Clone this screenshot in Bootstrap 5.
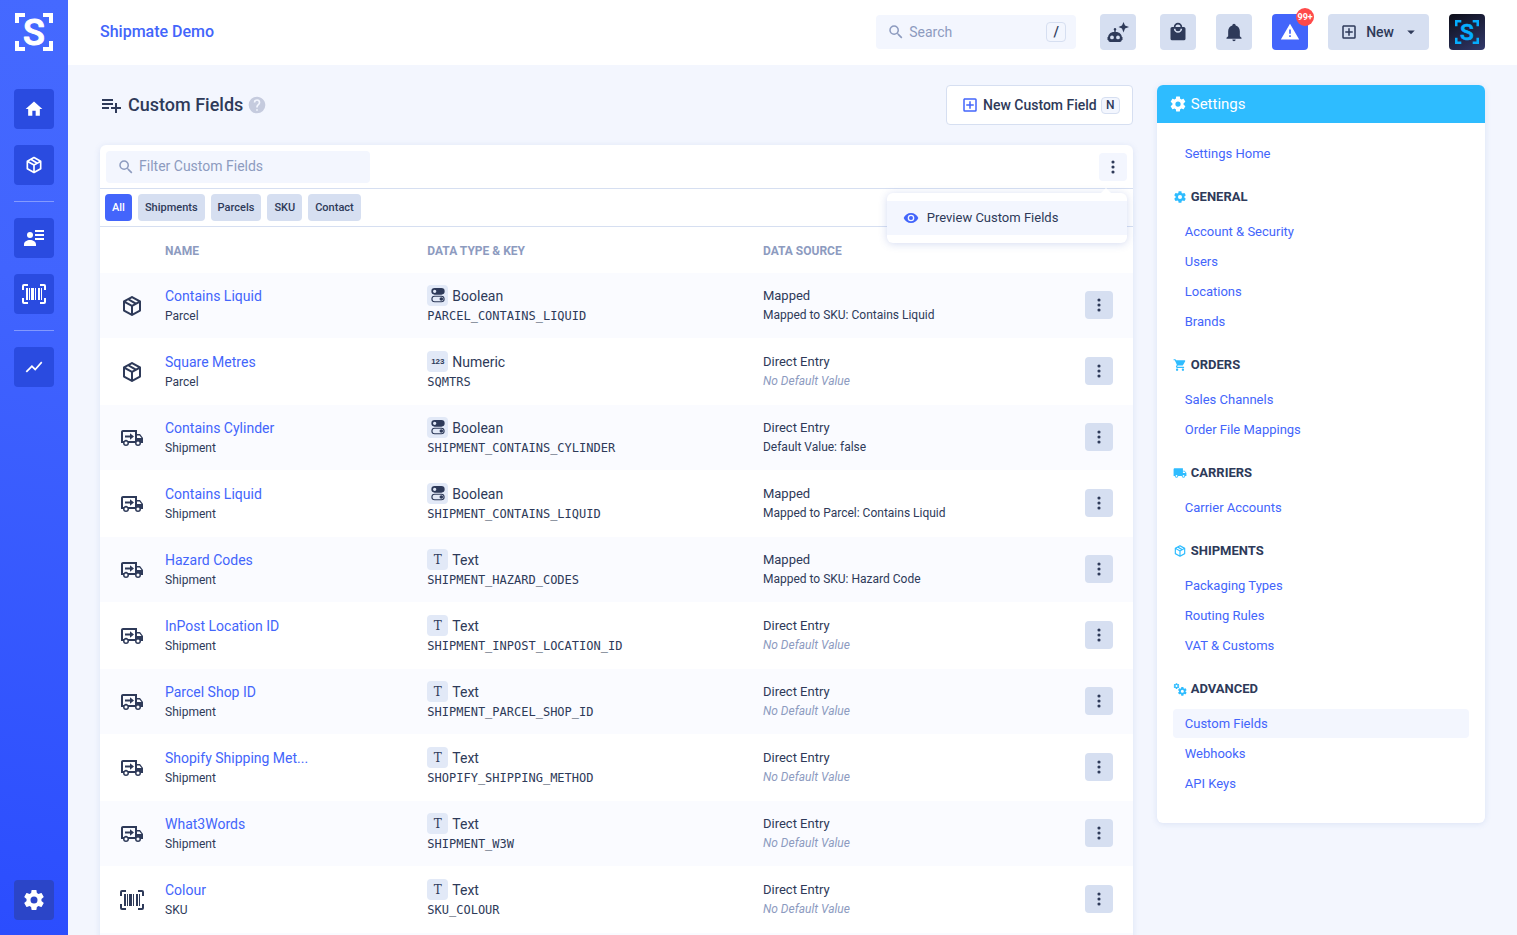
<!DOCTYPE html>
<html lang="en">
<head>
<meta charset="utf-8">
<meta name="viewport" content="width=device-width, initial-scale=1">
<title>Custom Fields</title>
<link href="https://cdn.jsdelivr.net/npm/bootstrap@5.3.0/dist/css/bootstrap.min.css" rel="stylesheet">
<style>
  :root { --ink:#2e3a59; --brand:#4365fb; --muted-ink:#8d9bbf; --tint:#f3f6fe; --chip:#d6dff1; --sky:#2ebcff; }
  body { font-family: Roboto, "Liberation Sans", sans-serif; font-size: 14px; line-height: 20px; color: var(--ink); background: var(--tint); }
  a { color: var(--brand); text-decoration: none; }
  svg { display: block; fill: currentColor; flex: none; }
  .i14 { width: 14px; height: 14px; } .i16 { width: 16px; height: 16px; } .i18 { width: 18px; height: 18px; }
  .i20 { width: 20px; height: 20px; } .i24 { width: 24px; height: 24px; }
  .rail { width: 68px; padding: 13px 14px 15px; background: linear-gradient(190deg, #4569ff, #4164fe 30%, #2b4dfe); }
  .rail .logo { width: 38px; height: 38px; margin-bottom: 38px; color: #fff; }
  .rail-btn { width: 40px; height: 40px; border-radius: 4px; background: #2a4be0; color: #fff; margin-bottom: 16px; }
  .rail-btn.current { background: #2b45c8; margin-bottom: 0; }
  .rail hr { width: 40px; margin: 0 0 16px; border-color: #fff; opacity: .35; }
  .topbar { height: 65px; padding: 0 32px 1px; background: #fff; }
  .site-name { font-size: 16px; font-weight: 500; }
  .field-box { background: var(--tint); border-radius: 4px; color: var(--muted-ink); padding-left: 11px; }
  .field-box input { border: 0; background: none; box-shadow: none; font-size: 14px; padding: 0; color: var(--ink); min-width: 0; }
  .field-box input::placeholder { color: var(--muted-ink); opacity: 1; }
  .field-box input:focus { background: none; box-shadow: none; }
  .search { width: 200px; height: 34px; padding-right: 10px; }
  .key { font-family: inherit; font-weight: 500; color: var(--ink); border: 1px solid var(--chip); border-radius: 4px; background: var(--tint); padding: 0; text-align: center; }
  .key-lg { width: 20px; height: 20px; font-size: 14px; line-height: 18px; }
  .key-sm { width: 19px; height: 17px; font-size: 12px; line-height: 15px; }
  .tiles { gap: 20px; }
  .tile { --bs-btn-padding-x: 0; --bs-btn-padding-y: 0; width: 36px; height: 36px; border: 0; border-radius: 4px; background: var(--chip); color: var(--ink); }
  .tile.alerting { background: var(--brand); color: #fff; }
  .tile.wide { width: auto; padding: 0 9px 0 12px; font-size: 14px; font-weight: 500; }
  .count { top: -6px; right: -6px; width: 18px; height: 18px; border-radius: 9px; background: #ff4a4a; color: #fff; font-size: 9px; font-weight: 700; line-height: 18px; }
  .avatar { width: 36px; height: 36px; border-radius: 4px; background: linear-gradient(150deg, #0c0d18, #32396b); color: #05adff; }
  .page { padding: 20px 32px 0; scrollbar-width: none; }
  .page::-webkit-scrollbar { display: none; }
  .page-head { margin-bottom: 20px; }
  .page-title { font-size: 18px; line-height: 24px; font-weight: 500; }
  .hint { color: #c5cbde; }
  .btn-outline { height: 40px; padding: 0 12px 0 14px; background: #fff; border: 1px solid var(--chip); border-radius: 4px; color: var(--ink); font-size: 14px; font-weight: 500; }
  .btn-outline svg { color: var(--brand); }
  .panel { background: #fff; border-radius: 6px; box-shadow: 0 1px 6px rgba(80,110,190,.14); }
  .bar { border-bottom: 1px solid var(--chip); }
  .toolbar-row { height: 44px; padding: 0 6px; }
  .pills { height: 38px; padding: 0 5px; gap: 6px; }
  .filter { width: 264px; height: 32px; }
  .dots { --bs-btn-padding-x: 0; --bs-btn-padding-y: 0; width: 28px; height: 28px; border: 0; border-radius: 4px; background: var(--chip); color: var(--ink); }
  .dots.pale { background: var(--tint); }
  .pill { height: 27px; padding: 2px 7px 0; border: 0; border-radius: 4px; background: var(--chip); color: var(--ink); font-size: 11px; font-weight: 500; }
  .pill.on { background: var(--brand); color: #fff; }
  .menu { top: 40px; right: 0; width: 240px; padding: 8px 0; border: 0; border-radius: 6px; box-shadow: 0 1px 8px rgba(60,90,190,.22); }
  .menu::before { content: ""; position: absolute; top: -5px; right: 16px; border: solid transparent; border-width: 0 5px 5px; border-bottom-color: #fff; }
  .menu .dropdown-item { height: 34px; padding: 0 16px; color: var(--ink); background: var(--tint); font-size: 13px; }
  .menu svg { color: var(--brand); }
  .grid { table-layout: fixed; width: 100%; }
  .grid .c-icon { width: 65px; } .grid .c-name { width: 25.4%; } .grid .c-type { width: 32.5%; } .grid .c-act { width: 68px; }
  .grid th { height: 45px; padding: 3px 0 0; font-size: 12px; font-weight: 700; color: var(--muted-ink); vertical-align: middle; }
  .grid td { height: 66px; padding: 13px 20px 0 0; border-top: 1px solid #fff; vertical-align: top; }
  .grid td:first-child { padding: 21px 20px 0; }
  .grid td:last-child { padding: 18px 20px 0; }
  .grid tbody tr:nth-child(odd) { background: #fafbff; }
  .name { width: 148px; font-size: 14px; }
  .sub { font-size: 12px; }
  .src { font-size: 13px; }
  .note { font-size: 12px; line-height: 18px; }
  .note-none { color: var(--muted-ink); font-style: italic; }
  .code { font: 12px/20px "DejaVu Sans Mono", monospace; }
  .kind { width: 21px; height: 21px; margin: -1px 4px 0 0; border-radius: 4px; background: #e2e9f7; }
  .kind-line { height: 20px; }
  .kind-num { font: 700 8px/22px "Liberation Sans", sans-serif; }
  .kind-txt { font: 12px/22px "DejaVu Serif", "Liberation Serif", serif; }
  .settings-head { height: 38px; padding: 0 12px; background: var(--sky); color: #fff; font-size: 15px; border-radius: 6px 6px 0 0; }
  .settings-body { padding: 16px 16px 24px; }
  .settings-body h2 { font-size: 13px; line-height: 20px; font-weight: 700; margin: 18px 0 10px; }
  .settings-body h2 svg { color: var(--sky); }
  .settings-body .nav-link { height: 29px; margin-bottom: 1px; padding: 0 12px; line-height: 29px; font-size: 13px; color: var(--brand); border-radius: 4px; }
  .settings-body .nav-link.active { background: var(--tint); }
</style>
</head>
<body>
<svg class="d-none" aria-hidden="true">
  <symbol id="logo" viewBox="0 0 38 38">
    <path d="M0 0h10v4H4v6H0zM28 0h10v10h-4V4h-6zM0 28h4v6h6v4H0zM34 28h4v10H28v-4h6z"/>
    <text x="19" y="32" text-anchor="middle" font-family="Roboto, sans-serif" font-weight="500" font-size="36" stroke="currentColor" stroke-width="1" stroke-linejoin="round">S</text>
  </symbol>
  <symbol id="home" viewBox="0 0 24 24"><path d="M10,20V14H14V20H19V12H22L12,3L2,12H5V20H10Z"/></symbol>
  <symbol id="box" viewBox="0 0 24 24"><path d="M21,16.5C21,16.88 20.79,17.21 20.47,17.38L12.57,21.82C12.41,21.94 12.21,22 12,22C11.79,22 11.59,21.94 11.43,21.82L3.53,17.38C3.21,17.21 3,16.88 3,16.5V7.5C3,7.12 3.21,6.79 3.53,6.62L11.43,2.18C11.59,2.06 11.79,2 12,2C12.21,2 12.41,2.06 12.57,2.18L20.47,6.62C20.79,6.79 21,7.12 21,7.5V16.5M12,4.15L10.11,5.22L16,8.61L17.96,7.5L12,4.15M6.04,7.5L12,10.85L13.96,9.75L8.08,6.35L6.04,7.5M5,15.91L11,19.29V12.58L5,9.21V15.91M19,15.91V9.21L13,12.58V19.29L19,15.91Z"/></symbol>
  <symbol id="people" viewBox="0 0 24 24"><circle cx="8" cy="9" r="3"/><path d="M2 20v-1.500C2 15.500 5 14 8 14s6 1.500 6 4.500V20zM13 4h9v2h-9zM13 8h9v2h-9zM13 12h9v2h-9z"/></symbol>
  <symbol id="barcode" viewBox="0 0 24 24"><path d="M4,6H6V18H4V6M7,6H8V18H7V6M9,6H12V18H9V6M13,6H14V18H13V6M16,6H18V18H16V6M19,6H20V18H19V6M2,4V8H0V4A2,2 0 0,1 2,2H6V4H2M22,2A2,2 0 0,1 24,4V8H22V4H18V2H22M2,16V20H6V22H2A2,2 0 0,1 0,20V16H2M22,20V16H24V20A2,2 0 0,1 22,22H18V20H22Z"/></symbol>
  <symbol id="trend" viewBox="0 0 24 24"><path d="M3.5,18.5L9.5,12.5L13.5,16.5L22,6.92L20.59,5.5L13.5,13.5L9.5,9.5L2,17L3.5,18.5Z"/></symbol>
  <symbol id="cog" viewBox="0 0 24 24"><path d="M12,15.5A3.5,3.5 0 0,1 8.5,12A3.5,3.5 0 0,1 12,8.5A3.5,3.5 0 0,1 15.5,12A3.5,3.5 0 0,1 12,15.5M19.43,12.97C19.47,12.65 19.5,12.33 19.5,12C19.5,11.67 19.47,11.34 19.43,11L21.54,9.37C21.73,9.22 21.78,8.95 21.66,8.73L19.66,5.27C19.54,5.05 19.27,4.96 19.05,5.05L16.56,6.05C16.04,5.66 15.5,5.32 14.87,5.07L14.5,2.42C14.46,2.18 14.25,2 14,2H10C9.75,2 9.54,2.18 9.5,2.42L9.13,5.07C8.5,5.32 7.96,5.66 7.44,6.05L4.95,5.05C4.73,4.96 4.46,5.05 4.34,5.27L2.34,8.73C2.21,8.95 2.27,9.22 2.46,9.37L4.57,11C4.53,11.34 4.5,11.67 4.5,12C4.5,12.33 4.53,12.65 4.57,12.97L2.46,14.63C2.27,14.78 2.21,15.05 2.34,15.27L4.34,18.73C4.46,18.95 4.73,19.03 4.95,18.95L7.44,17.94C7.96,18.34 8.5,18.68 9.13,18.93L9.5,21.58C9.54,21.82 9.75,22 10,22H14C14.25,22 14.46,21.82 14.5,21.58L14.87,18.93C15.5,18.67 16.04,18.34 16.56,17.94L19.05,18.95C19.27,19.03 19.54,18.95 19.66,18.73L21.66,15.27C21.78,15.05 21.73,14.78 21.54,14.63L19.43,12.97Z"/></symbol>
  <symbol id="cogs" viewBox="0 0 24 24"><use href="#cog" x="0" y="1" width="12" height="12"/><use href="#cog" x="7" y="7" width="18" height="18"/></symbol>
  <symbol id="search" viewBox="0 0 24 24"><path d="M9.5,3A6.5,6.5 0 0,1 16,9.5C16,11.11 15.41,12.59 14.44,13.73L14.71,14H15.5L20.5,19L19,20.5L14,15.5V14.71L13.73,14.44C12.59,15.41 11.11,16 9.5,16A6.5,6.5 0 0,1 3,9.5A6.5,6.5 0 0,1 9.5,3M9.5,5C7,5 5,7 5,9.5C5,12 7,14 9.5,14C12,14 14,12 14,9.5C14,7 12,5 9.5,5Z"/></symbol>
  <symbol id="robot" viewBox="0 0 24 24"><path d="M9 8a1.300 1.300 0 0 1 .7 2.400V12H10c3.300 0 5.600 2.200 5.900 5h.6v3h-.7c-.2 1-.9 2-2 2H4.200c-1.100 0-1.800-1-2-2H1.500v-3h.6C2.400 14.200 4.700 12 8 12h.3v-1.600A1.300 1.300 0 0 1 9 8zM6 15.500a1.900 1.900 0 1 0 0 3.800 1.900 1.900 0 0 0 0-3.800zm6 0a1.900 1.900 0 1 0 0 3.800 1.900 1.900 0 0 0 0-3.800zM17.500 2 19 5.500l4 1.500-4 1.500-1.500 4-1.500-4L12.500 7 16 5.500z"/></symbol>
  <symbol id="bag" viewBox="0 0 24 24"><path d="M12,13A5,5 0 0,1 7,8H9A3,3 0 0,0 12,11A3,3 0 0,0 15,8H17A5,5 0 0,1 12,13M12,3A3,3 0 0,1 15,6H9A3,3 0 0,1 12,3M19,6H17A5,5 0 0,0 12,1A5,5 0 0,0 7,6H5C3.89,6 3,6.89 3,8V20A2,2 0 0,0 5,22H19A2,2 0 0,0 21,20V8C21,6.89 20.1,6 19,6Z"/></symbol>
  <symbol id="bell" viewBox="0 0 24 24"><path d="M21,19V20H3V19L5,17V11C5,7.9 7.03,5.17 10,4.29C10,4.19 10,4.1 10,4A2,2 0 0,1 12,2A2,2 0 0,1 14,4C14,4.1 14,4.19 14,4.29C16.97,5.17 19,7.9 19,11V17L21,19M14,21A2,2 0 0,1 12,23A2,2 0 0,1 10,21"/></symbol>
  <symbol id="alert" viewBox="0 0 24 24"><path d="M13 14H11V9H13M13 18H11V16H13M1 21H23L12 2L1 21Z"/></symbol>
  <symbol id="plusbox" viewBox="0 0 24 24"><path d="M19,19V5H5V19H19M19,3A2,2 0 0,1 21,5V19A2,2 0 0,1 19,21H5A2,2 0 0,1 3,19V5C3,3.89 3.9,3 5,3H19M11,7H13V11H17V13H13V17H11V13H7V11H11V7Z"/></symbol>
  <symbol id="caret" viewBox="0 0 24 24"><path d="M7 10h10l-5 5z"/></symbol>
  <symbol id="listplus" viewBox="0 0 24 24"><path d="M2 16H9V14H2M17 14V10H15V14H11V16H15V20H17V16H21V14M13 6H2V8H13M13 10H2V12H13V10Z"/></symbol>
  <symbol id="help" viewBox="0 0 24 24"><path d="M15.07,11.25L14.17,12.17C13.45,12.89 13,13.5 13,15H11V14.5C11,13.39 11.45,12.39 12.17,11.67L13.41,10.41C13.78,10.05 14,9.55 14,9C14,7.89 13.1,7 12,7A2,2 0 0,0 10,9H8A4,4 0 0,1 12,5A4,4 0 0,1 16,9C16,9.88 15.64,10.67 15.07,11.25M13,19H11V17H13M12,2A10,10 0 0,0 2,12A10,10 0 0,0 12,22A10,10 0 0,0 22,12C22,6.47 17.5,2 12,2Z"/></symbol>
  <symbol id="more" viewBox="0 0 24 24"><circle cx="12" cy="6" r="1.900"/><circle cx="12" cy="12" r="1.900"/><circle cx="12" cy="18" r="1.900"/></symbol>
  <symbol id="eye" viewBox="0 0 24 24"><path d="M12,9A3,3 0 0,0 9,12A3,3 0 0,0 12,15A3,3 0 0,0 15,12A3,3 0 0,0 12,9M12,17A5,5 0 0,1 7,12A5,5 0 0,1 12,7A5,5 0 0,1 17,12A5,5 0 0,1 12,17M12,4.5C7,4.5 2.73,7.61 1,12C2.73,16.39 7,19.5 12,19.5C17,19.5 21.27,16.39 23,12C21.27,7.61 17,4.5 12,4.5Z"/></symbol>
  <symbol id="cart" viewBox="0 0 24 24"><path d="M17,18C15.89,18 15,18.89 15,20A2,2 0 0,0 17,22A2,2 0 0,0 19,20C19,18.89 18.1,18 17,18M1,2V4H3L6.6,11.59L5.24,14.04C5.09,14.32 5,14.65 5,15A2,2 0 0,0 7,17H19V15H7.42A0.25,0.25 0 0,1 7.17,14.75C7.17,14.7 7.18,14.66 7.2,14.63L8.1,13H15.55C16.3,13 16.96,12.58 17.3,11.97L20.88,5.5C20.95,5.34 21,5.17 21,5A1,1 0 0,0 20,4H5.21L4.27,2M7,18C5.89,18 5,18.89 5,20A2,2 0 0,0 7,22A2,2 0 0,0 9,20C9,18.89 8.1,18 7,18Z"/></symbol>
  <symbol id="truck" viewBox="0 0 24 24"><path d="M18,18.5A1.5,1.5 0 0,1 16.5,17A1.5,1.5 0 0,1 18,15.5A1.5,1.5 0 0,1 19.5,17A1.5,1.5 0 0,1 18,18.5M19.5,9.5L21.46,12H17V9.5M6,18.5A1.5,1.5 0 0,1 4.5,17A1.5,1.5 0 0,1 6,15.5A1.5,1.5 0 0,1 7.5,17A1.5,1.5 0 0,1 6,18.5M20,8H17V4H3C1.89,4 1,4.89 1,6V17H3A3,3 0 0,0 6,20A3,3 0 0,0 9,17H15A3,3 0 0,0 18,20A3,3 0 0,0 21,17H23V12L20,8Z"/></symbol>
  <symbol id="dispatch" viewBox="0 0 24 24"><path fill-rule="evenodd" d="M3 4h14v4h3l3 4v5h-2a3 3 0 0 1-6 0H9a3 3 0 0 1-6 0H1V6c0-1.100.9-2 2-2zm0 2v9h.8a3 3 0 0 1 4.400 0H15V6zm14 3.500V12h4.500l-2-2.500zM6 15.500a1.500 1.500 0 1 0 0 3 1.500 1.500 0 0 0 0-3zm12 0a1.500 1.500 0 1 0 0 3 1.500 1.500 0 0 0 0-3z"/><path d="M5 9.500h5V7.200l4 3.300-4 3.300v-2.300H5z"/></symbol>
  <symbol id="toggle" viewBox="0 0 24 24"><path fill-rule="evenodd" d="M7 1.500h10a5 5 0 0 1 0 10H7a5 5 0 0 1 0-10zM7 4a2.500 2.500 0 1 0 0 5 2.500 2.500 0 0 0 0-5zM7 13h10a5 5 0 0 1 0 10H7a5 5 0 0 1 0-10zm0 1.700a3.300 3.300 0 0 0 0 6.600h10a3.300 3.300 0 0 0 0-6.600z"/><circle cx="17" cy="18" r="2.700"/></symbol>
</svg>

<div class="d-flex vh-100 overflow-hidden">
  <nav class="rail d-flex flex-column align-items-center flex-shrink-0" aria-label="Main">
    <a class="logo" href="#" aria-label="Shipmate"><svg width="38" height="38"><use href="#logo"/></svg></a>
    <a class="rail-btn d-flex align-items-center justify-content-center" href="#" aria-label="Home"><svg class="i20"><use href="#home"/></svg></a>
    <a class="rail-btn d-flex align-items-center justify-content-center" href="#" aria-label="Parcels"><svg class="i20"><use href="#box"/></svg></a>
    <hr>
    <a class="rail-btn d-flex align-items-center justify-content-center" href="#" aria-label="Contacts"><svg class="i24"><use href="#people"/></svg></a>
    <a class="rail-btn d-flex align-items-center justify-content-center" href="#" aria-label="Products"><svg class="i24"><use href="#barcode"/></svg></a>
    <hr>
    <a class="rail-btn d-flex align-items-center justify-content-center" href="#" aria-label="Reports"><svg class="i20"><use href="#trend"/></svg></a>
    <a class="rail-btn current mt-auto d-flex align-items-center justify-content-center" href="#" aria-label="Settings"><svg class="i24"><use href="#cog"/></svg></a>
  </nav>

  <div class="d-flex flex-column flex-grow-1 overflow-hidden">
    <header class="topbar d-flex align-items-center flex-shrink-0">
      <a class="site-name me-auto" href="#">Shipmate Demo</a>
      <div class="field-box search d-flex align-items-center me-4">
        <svg class="i18 me-1"><use href="#search"/></svg>
        <input class="form-control" type="text" placeholder="Search" aria-label="Search">
        <kbd class="key key-lg flex-shrink-0 bg-transparent">/</kbd>
      </div>
      <button class="tile btn d-flex align-items-center justify-content-center me-4" type="button" aria-label="Assistant"><svg class="i24"><use href="#robot"/></svg></button>
      <div class="tiles d-flex align-items-center">
        <button class="tile btn d-flex align-items-center justify-content-center" type="button" aria-label="Store"><svg class="i20"><use href="#bag"/></svg></button>
        <button class="tile btn d-flex align-items-center justify-content-center" type="button" aria-label="Notifications"><svg class="i20"><use href="#bell"/></svg></button>
        <button class="tile alerting btn d-flex align-items-center justify-content-center position-relative" type="button" aria-label="Alerts"><svg class="i20"><use href="#alert"/></svg><span class="count position-absolute">99+</span></button>
        <button class="tile wide btn d-flex align-items-center" type="button"><svg class="i18 me-2"><use href="#plusbox"/></svg>New<svg class="i18 ms-2"><use href="#caret"/></svg></button>
        <a class="avatar d-flex align-items-center justify-content-center" href="#" aria-label="Account"><svg width="24" height="24"><use href="#logo"/></svg></a>
      </div>
    </header>

    <main class="page flex-grow-1 overflow-auto">
      <div class="row gx-4">
        <div class="col-9">
          <div class="page-head d-flex align-items-center justify-content-between">
            <h1 class="page-title d-flex align-items-center mb-0"><svg class="i24 me-1"><use href="#listplus"/></svg>Custom Fields<svg class="hint i20 ms-1"><use href="#help"/></svg></h1>
            <button class="btn-outline btn d-flex align-items-center" type="button"><svg class="i18 me-1"><use href="#plusbox"/></svg>New Custom Field<kbd class="key key-sm ms-1">N</kbd></button>
          </div>

          <section class="panel">
            <div class="bar toolbar-row d-flex align-items-center justify-content-between">
              <div class="field-box filter d-flex align-items-center">
                <svg class="i18 me-1"><use href="#search"/></svg>
                <input class="form-control" type="text" placeholder="Filter Custom Fields" aria-label="Filter Custom Fields">
              </div>
              <div class="dropdown">
                <button class="dots pale btn d-flex align-items-center justify-content-center" type="button" aria-label="More actions" aria-expanded="true"><svg class="i20"><use href="#more"/></svg></button>
                <div class="menu dropdown-menu show">
                  <a class="dropdown-item d-flex align-items-center" href="#"><svg class="i16 me-2"><use href="#eye"/></svg>Preview Custom Fields</a>
                </div>
              </div>
            </div>
            <div class="bar pills d-flex align-items-center">
              <button class="pill on btn" type="button">All</button>
              <button class="pill btn" type="button">Shipments</button>
              <button class="pill btn" type="button">Parcels</button>
              <button class="pill btn" type="button">SKU</button>
              <button class="pill btn" type="button">Contact</button>
            </div>
            <table class="grid">
              <colgroup><col class="c-icon"><col class="c-name"><col class="c-type"><col><col class="c-act"></colgroup>
              <thead><tr><th></th><th scope="col">NAME</th><th scope="col">DATA TYPE &amp; KEY</th><th scope="col">DATA SOURCE</th><th></th></tr></thead>
              <tbody>
                <tr><td><svg class="i24"><use href="#box"/></svg></td><td><a class="name d-block text-truncate" href="#">Contains Liquid</a><div class="sub">Parcel</div></td><td><div class="kind-line d-flex"><span class="kind d-flex align-items-center justify-content-center"><svg class="i16"><use href="#toggle"/></svg></span>Boolean</div><div class="code">PARCEL_CONTAINS_LIQUID</div></td><td><div class="src">Mapped</div><div class="note">Mapped to SKU: Contains Liquid</div></td><td><button class="dots btn d-flex align-items-center justify-content-center" type="button" aria-label="Row actions"><svg class="i20"><use href="#more"/></svg></button></td></tr>
                <tr><td><svg class="i24"><use href="#box"/></svg></td><td><a class="name d-block text-truncate" href="#">Square Metres</a><div class="sub">Parcel</div></td><td><div class="kind-line d-flex"><span class="kind kind-num text-center">123</span>Numeric</div><div class="code">SQMTRS</div></td><td><div class="src">Direct Entry</div><div class="note note-none">No Default Value</div></td><td><button class="dots btn d-flex align-items-center justify-content-center" type="button" aria-label="Row actions"><svg class="i20"><use href="#more"/></svg></button></td></tr>
                <tr><td><svg class="i24"><use href="#dispatch"/></svg></td><td><a class="name d-block text-truncate" href="#">Contains Cylinder</a><div class="sub">Shipment</div></td><td><div class="kind-line d-flex"><span class="kind d-flex align-items-center justify-content-center"><svg class="i16"><use href="#toggle"/></svg></span>Boolean</div><div class="code">SHIPMENT_CONTAINS_CYLINDER</div></td><td><div class="src">Direct Entry</div><div class="note">Default Value: false</div></td><td><button class="dots btn d-flex align-items-center justify-content-center" type="button" aria-label="Row actions"><svg class="i20"><use href="#more"/></svg></button></td></tr>
                <tr><td><svg class="i24"><use href="#dispatch"/></svg></td><td><a class="name d-block text-truncate" href="#">Contains Liquid</a><div class="sub">Shipment</div></td><td><div class="kind-line d-flex"><span class="kind d-flex align-items-center justify-content-center"><svg class="i16"><use href="#toggle"/></svg></span>Boolean</div><div class="code">SHIPMENT_CONTAINS_LIQUID</div></td><td><div class="src">Mapped</div><div class="note">Mapped to Parcel: Contains Liquid</div></td><td><button class="dots btn d-flex align-items-center justify-content-center" type="button" aria-label="Row actions"><svg class="i20"><use href="#more"/></svg></button></td></tr>
                <tr><td><svg class="i24"><use href="#dispatch"/></svg></td><td><a class="name d-block text-truncate" href="#">Hazard Codes</a><div class="sub">Shipment</div></td><td><div class="kind-line d-flex"><span class="kind kind-txt text-center">T</span>Text</div><div class="code">SHIPMENT_HAZARD_CODES</div></td><td><div class="src">Mapped</div><div class="note">Mapped to SKU: Hazard Code</div></td><td><button class="dots btn d-flex align-items-center justify-content-center" type="button" aria-label="Row actions"><svg class="i20"><use href="#more"/></svg></button></td></tr>
                <tr><td><svg class="i24"><use href="#dispatch"/></svg></td><td><a class="name d-block text-truncate" href="#">InPost Location ID</a><div class="sub">Shipment</div></td><td><div class="kind-line d-flex"><span class="kind kind-txt text-center">T</span>Text</div><div class="code">SHIPMENT_INPOST_LOCATION_ID</div></td><td><div class="src">Direct Entry</div><div class="note note-none">No Default Value</div></td><td><button class="dots btn d-flex align-items-center justify-content-center" type="button" aria-label="Row actions"><svg class="i20"><use href="#more"/></svg></button></td></tr>
                <tr><td><svg class="i24"><use href="#dispatch"/></svg></td><td><a class="name d-block text-truncate" href="#">Parcel Shop ID</a><div class="sub">Shipment</div></td><td><div class="kind-line d-flex"><span class="kind kind-txt text-center">T</span>Text</div><div class="code">SHIPMENT_PARCEL_SHOP_ID</div></td><td><div class="src">Direct Entry</div><div class="note note-none">No Default Value</div></td><td><button class="dots btn d-flex align-items-center justify-content-center" type="button" aria-label="Row actions"><svg class="i20"><use href="#more"/></svg></button></td></tr>
                <tr><td><svg class="i24"><use href="#dispatch"/></svg></td><td><a class="name d-block text-truncate" href="#">Shopify Shipping Met...</a><div class="sub">Shipment</div></td><td><div class="kind-line d-flex"><span class="kind kind-txt text-center">T</span>Text</div><div class="code">SHOPIFY_SHIPPING_METHOD</div></td><td><div class="src">Direct Entry</div><div class="note note-none">No Default Value</div></td><td><button class="dots btn d-flex align-items-center justify-content-center" type="button" aria-label="Row actions"><svg class="i20"><use href="#more"/></svg></button></td></tr>
                <tr><td><svg class="i24"><use href="#dispatch"/></svg></td><td><a class="name d-block text-truncate" href="#">What3Words</a><div class="sub">Shipment</div></td><td><div class="kind-line d-flex"><span class="kind kind-txt text-center">T</span>Text</div><div class="code">SHIPMENT_W3W</div></td><td><div class="src">Direct Entry</div><div class="note note-none">No Default Value</div></td><td><button class="dots btn d-flex align-items-center justify-content-center" type="button" aria-label="Row actions"><svg class="i20"><use href="#more"/></svg></button></td></tr>
                <tr><td><svg class="i24"><use href="#barcode"/></svg></td><td><a class="name d-block text-truncate" href="#">Colour</a><div class="sub">SKU</div></td><td><div class="kind-line d-flex"><span class="kind kind-txt text-center">T</span>Text</div><div class="code">SKU_COLOUR</div></td><td><div class="src">Direct Entry</div><div class="note note-none">No Default Value</div></td><td><button class="dots btn d-flex align-items-center justify-content-center" type="button" aria-label="Row actions"><svg class="i20"><use href="#more"/></svg></button></td></tr>
                <tr><td colspan="5"></td></tr>
              </tbody>
            </table>
          </section>
        </div>

        <aside class="col-3">
          <div class="panel">
            <div class="settings-head d-flex align-items-center"><svg class="i18 me-1"><use href="#cog"/></svg>Settings</div>
            <nav class="settings-body nav flex-column" aria-label="Settings">
              <a class="nav-link" href="#">Settings Home</a>
              <h2 class="d-flex align-items-center"><svg class="i14 me-1"><use href="#cog"/></svg>GENERAL</h2>
              <a class="nav-link" href="#">Account &amp; Security</a>
              <a class="nav-link" href="#">Users</a>
              <a class="nav-link" href="#">Locations</a>
              <a class="nav-link" href="#">Brands</a>
              <h2 class="d-flex align-items-center"><svg class="i14 me-1"><use href="#cart"/></svg>ORDERS</h2>
              <a class="nav-link" href="#">Sales Channels</a>
              <a class="nav-link" href="#">Order File Mappings</a>
              <h2 class="d-flex align-items-center"><svg class="i14 me-1"><use href="#truck"/></svg>CARRIERS</h2>
              <a class="nav-link" href="#">Carrier Accounts</a>
              <h2 class="d-flex align-items-center"><svg class="i14 me-1"><use href="#box"/></svg>SHIPMENTS</h2>
              <a class="nav-link" href="#">Packaging Types</a>
              <a class="nav-link" href="#">Routing Rules</a>
              <a class="nav-link" href="#">VAT &amp; Customs</a>
              <h2 class="d-flex align-items-center"><svg class="i14 me-1"><use href="#cogs"/></svg>ADVANCED</h2>
              <a class="nav-link active" href="#">Custom Fields</a>
              <a class="nav-link" href="#">Webhooks</a>
              <a class="nav-link" href="#">API Keys</a>
            </nav>
          </div>
        </aside>
      </div>
    </main>
  </div>
</div>
<script src="https://cdn.jsdelivr.net/npm/bootstrap@5.3.0/dist/js/bootstrap.bundle.min.js"></script>
</body>
</html>
